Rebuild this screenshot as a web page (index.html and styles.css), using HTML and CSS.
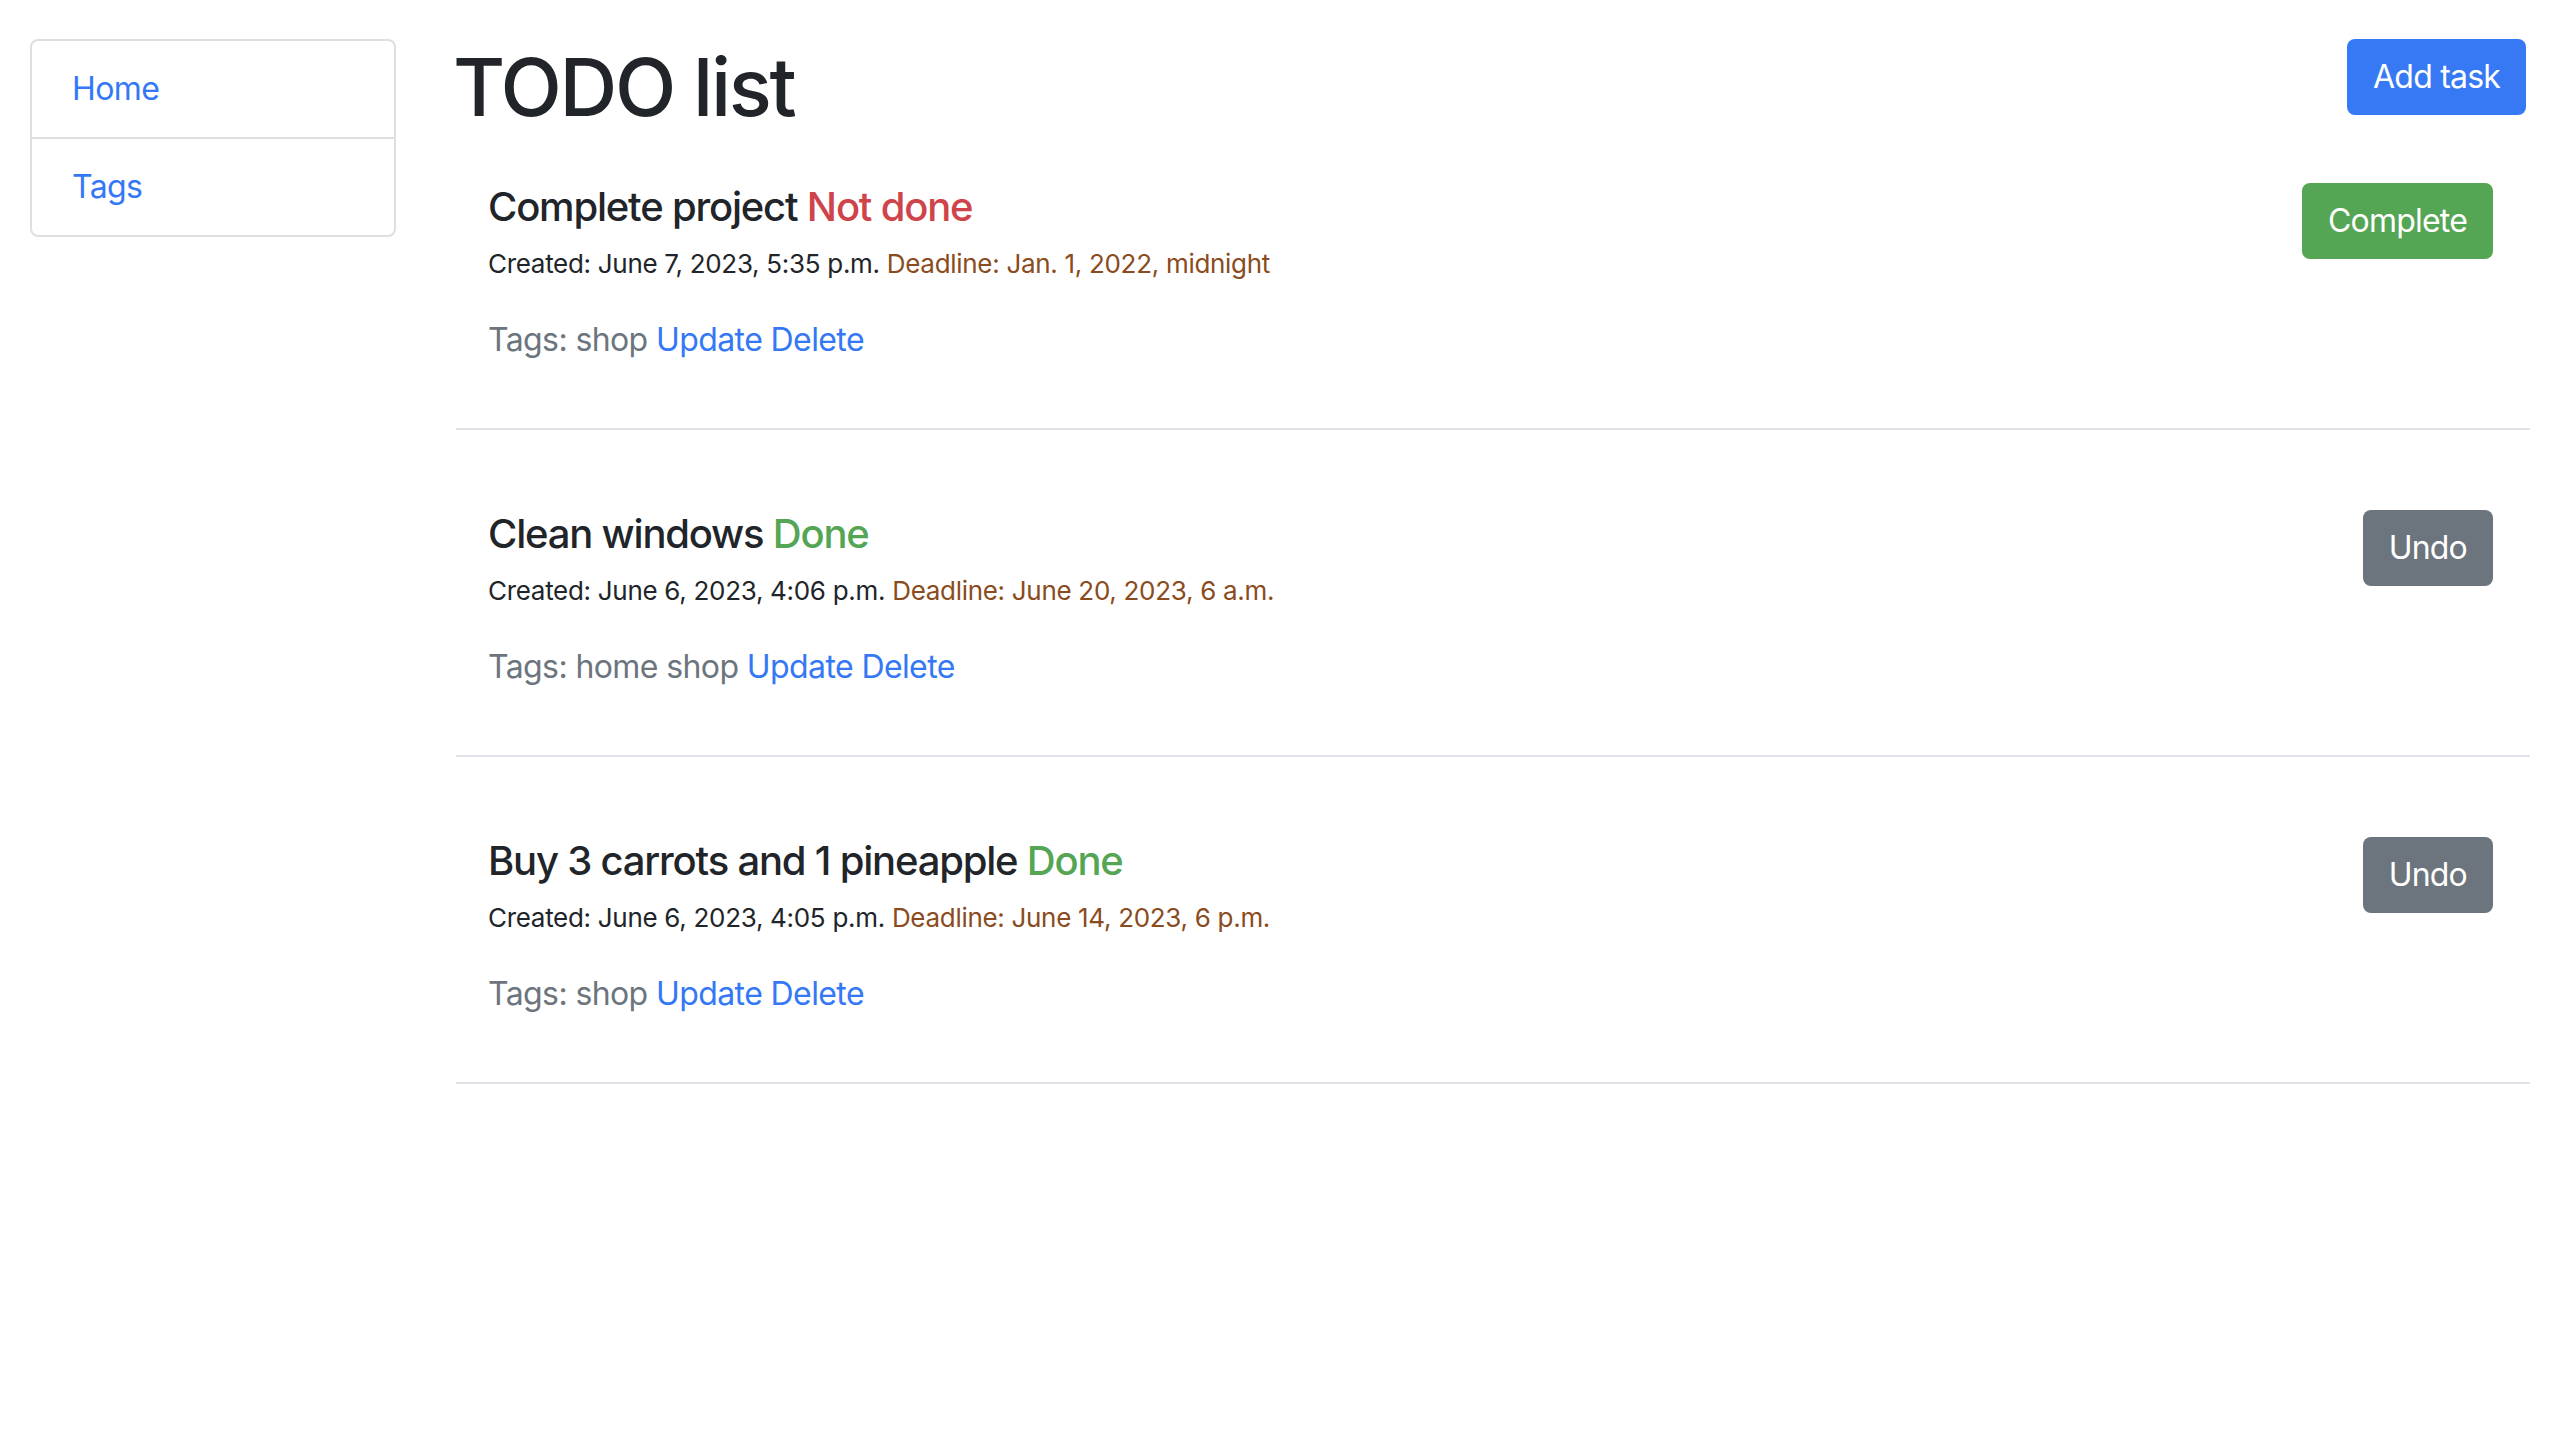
FILE: index.html
```html
<!DOCTYPE html>
<html lang="en">
<head>
<meta charset="utf-8">
<title>TODO list</title>
<link rel="stylesheet" href="styles.css">
</head>
<body>
<div class="page">
  <aside class="sidebar">
    <ul class="list-group">
      <li class="list-item"><a href="#">Home</a></li>
      <li class="list-item"><a href="#">Tags</a></li>
    </ul>
  </aside>
  <main class="main">
    <header class="header">
      <h1 class="title">TODO list</h1>
      <a href="#" class="btn btn-primary">Add task</a>
    </header>

    <article class="task">
      <div class="task-row">
        <div class="task-info">
          <h5 class="task-title">Complete project <span class="status-bad">Not done</span></h5>
          <p class="task-dates">Created: June 7, 2023, 5:35 p.m. <span class="deadline">Deadline: Jan. 1, 2022, midnight</span></p>
          <p class="task-tags">Tags: shop <a href="#">Update</a> <a href="#">Delete</a></p>
        </div>
        <a href="#" class="btn btn-success">Complete</a>
      </div>
      <hr class="sep">
    </article>

    <article class="task">
      <div class="task-row">
        <div class="task-info">
          <h5 class="task-title">Clean windows <span class="status-ok">Done</span></h5>
          <p class="task-dates">Created: June 6, 2023, 4:06 p.m. <span class="deadline">Deadline: June 20, 2023, 6 a.m.</span></p>
          <p class="task-tags">Tags: home shop <a href="#">Update</a> <a href="#">Delete</a></p>
        </div>
        <a href="#" class="btn btn-secondary">Undo</a>
      </div>
      <hr class="sep">
    </article>

    <article class="task">
      <div class="task-row">
        <div class="task-info">
          <h5 class="task-title">Buy 3 carrots and 1 pineapple <span class="status-ok">Done</span></h5>
          <p class="task-dates">Created: June 6, 2023, 4:05 p.m. <span class="deadline">Deadline: June 14, 2023, 6 p.m.</span></p>
          <p class="task-tags">Tags: shop <a href="#">Update</a> <a href="#">Delete</a></p>
        </div>
        <a href="#" class="btn btn-secondary">Undo</a>
      </div>
      <hr class="sep">
    </article>
  </main>
</div>
</body>
</html>
```

FILE: styles.css
```css
html, body {
  margin: 0;
  padding: 0;
  background: #ffffff;
}

body {
  font-family: Inter, "Liberation Sans", Arial, sans-serif;
  font-size: 32px;
  line-height: 48px;
  letter-spacing: -0.6px;
  color: #212529;
}

a {
  color: #3478f6;
  text-decoration: none;
}

.page {
  display: flex;
  align-items: flex-start;
  padding: 39px 26px 0 30px;
}

.sidebar {
  width: 366px;
  flex: 0 0 366px;
}

.list-group {
  list-style: none;
  margin: 0;
  padding: 0;
  border: 2px solid #dfdfdf;
  border-radius: 8px;
}

.list-item {
  padding: 24px 40px;
}

.list-item + .list-item {
  border-top: 2px solid #dfdfdf;
}

.main {
  flex: 1;
  margin-left: 60px;
}

.header {
  display: flex;
  justify-content: space-between;
  align-items: flex-start;
  padding-right: 4px;
}

.title {
  margin: 0 0 16px -3px;
  font-size: 80px;
  line-height: 96px;
  font-weight: 500;
  letter-spacing: -2.3px;
}

.btn {
  display: inline-block;
  padding: 12px 24px;
  border: 2px solid transparent;
  border-radius: 8px;
  font-size: 32px;
  line-height: 48px;
  letter-spacing: -0.8px;
  color: #ffffff;
  white-space: nowrap;
}

.btn-primary {
  background: #3779f5;
}

.btn-success {
  background: #54a554;
}

.btn-secondary {
  background: #6c757d;
}

.task {
  padding: 32px 0 0;
}

.task + .task {
  padding-top: 80px;
}

.task-row {
  display: flex;
  justify-content: space-between;
  align-items: flex-start;
  padding: 0 37px 0 32px;
}

.task-title {
  margin: 0 0 12px;
  font-size: 40px;
  line-height: 48px;
  font-weight: 500;
  letter-spacing: -1.2px;
}

.status-bad {
  color: #cf434b;
}

.status-ok {
  color: #54a554;
}

.task-dates {
  margin: 0 0 31px;
  font-size: 26px;
  line-height: 42px;
  letter-spacing: -0.3px;
}

.deadline {
  color: #8a4b20;
}

.task-tags {
  margin: 0;
  color: #6c757d;
}

.sep {
  margin: 64px 0 0;
  border: 0;
  border-top: 2px solid #e1e4e8;
  height: 0;
}
```
